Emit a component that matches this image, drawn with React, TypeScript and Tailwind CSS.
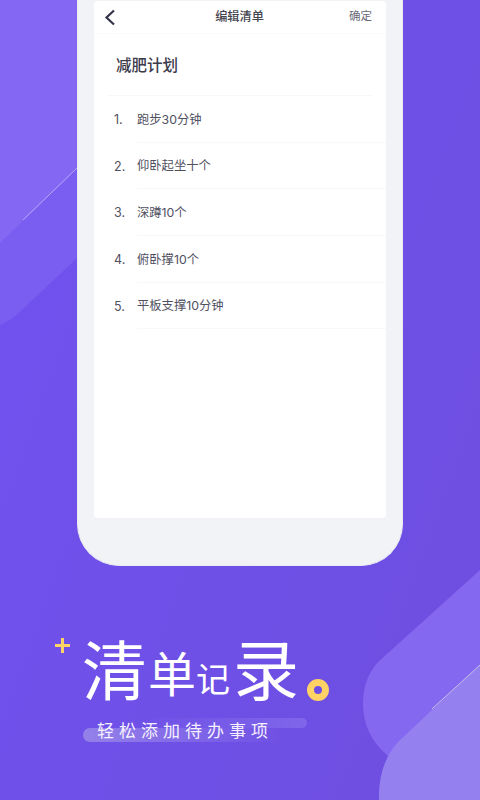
const font = "font-['Inter','Noto_Sans_CJK_SC',sans-serif]";

const items = ["跑步30分钟", "仰卧起坐十个", "深蹲10个", "俯卧撑10个", "平板支撑10分钟"];

function Background() {
    return (
        <svg className="absolute inset-0" width="480" height="800" viewBox="0 0 480 800">
            <defs>
                <linearGradient id="base" x1="0" y1="0" x2="1" y2="0.6">
                    <stop offset="0" stopColor="#7052f0" />
                    <stop offset="1" stopColor="#6e4fe2" />
                </linearGradient>
            </defs>
            <rect width="480" height="800" fill="url(#base)" />
            <path d="M0 0H90V246L24 308Q10 322 0 325Z" fill="#7a5df1" />
            <path d="M0 0H90V156L0 243Z" fill="#8467f2" />
            <path d="M23 220L77 168" stroke="#b9a8f8" strokeWidth="1" fill="none" />
            <path d="M480 570L377 663Q363 680 363 703Q363 735 387 755L433 800H480Z" fill="#8469f0" />
            <path d="M480 665L398 742Q378 764 379 800H480Z" fill="#9580f0" />
            <path d="M432 709L480 665" stroke="#c9c2e8" strokeWidth="1" fill="none" />
        </svg>
    );
}

function Row({ n, text }: { n: number; text: string }) {
    return (
        <div className="h-[46.7px] flex items-center pl-[20px]">
            <span className="w-[23px] pt-[2px] text-[12.5px] text-[#50505f]">{n}.</span>
            <span className="flex-1 h-full pt-[2px] flex items-center border-b border-[#f8f8fa] text-[12.3px] text-[#50505f]">
                {text}
            </span>
        </div>
    );
}

export default function App() {
    return (
        <div className={`relative w-[480px] h-[800px] overflow-hidden ${font}`}>
            <Background />

            <div className="relative ml-[77px] w-[326px] h-[566px] rounded-b-[42px] bg-[#f2f3f7] border-x border-b border-[#e9ebf1] pt-px px-[16px]">
                <div className="h-[517px] bg-white rounded-[4px]">
                    <div className="h-[33px] flex items-center justify-between pl-[10px] pr-[14px] border-b border-[#fbfbfc]">
                        <svg width="12" height="17" viewBox="0 0 12 17" fill="none">
                            <path d="M10 1.5L2.5 8.5L10 15.5" stroke="#33334a" strokeWidth="2.2" />
                        </svg>
                        <span className="text-[12.2px] font-medium text-[#44444f] ml-[14px]">编辑清单</span>
                        <span className="text-[11.5px] text-[#6a6a78]">确定</span>
                    </div>
                    <div className="h-[62px] mx-[14px] pt-[3px] flex items-center pl-[8px] border-b border-[#f8f8fa] text-[15.5px] font-medium text-[#3a3a4a]">
                        减肥计划
                    </div>
                    {items.map((t, i) => (
                        <Row key={t} n={i + 1} text={t} />
                    ))}
                </div>
            </div>

            <div className="relative h-[234px]">
                <div className="absolute left-[55px] top-[72px] w-[15px] h-[15px]">
                    <div className="absolute left-[6px] top-0 w-[3px] h-[15px] bg-[#ffd266]" />
                    <div className="absolute left-0 top-[6px] w-[15px] h-[3px] bg-[#ffd266]" />
                </div>
                <div className="absolute left-[83px] top-[162px] w-[200px] h-[14px] rounded-full bg-gradient-to-r from-[#9481e8] to-transparent" />
                <div className="absolute left-[140px] top-[152px] w-[167px] h-[10px] rounded-full bg-gradient-to-r from-transparent to-[#7f66ea]" />
                <div className="relative pl-[82px] pt-[72px] flex items-end text-white leading-none">
                    <span className="text-[65px] leading-none">清</span>
                    <span className="text-[48px] leading-none ml-[1px] mb-[5px]">单</span>
                    <span className="text-[34px] leading-none mb-[7px]">记</span>
                    <span className="text-[66px] leading-none ml-[3px]">录</span>
                </div>
                <div className="absolute left-[307px] top-[113px] w-[22px] h-[22px] rounded-full border-[7px] border-[#ffd266]" />
                <div className="relative mt-[16px] pl-[97px] text-[17px] leading-[22px] tracking-[5px] text-[#f4f0ff]">
                    轻松添加待办事项
                </div>
            </div>
        </div>
    );
}
